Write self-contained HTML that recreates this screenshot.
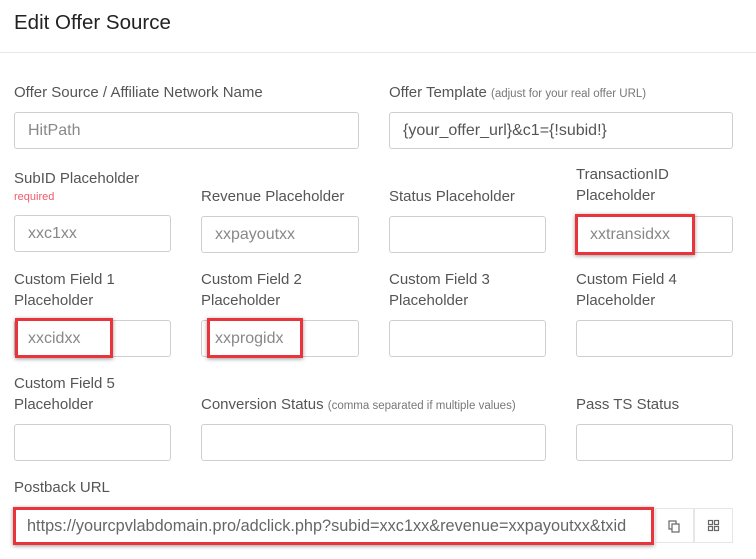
<!DOCTYPE html>
<html><head><style>
body{margin:0;width:756px;height:559px;background:#fff;font-family:"Liberation Sans",sans-serif;position:relative;overflow:hidden}
.a{position:absolute;white-space:nowrap}
.t{left:14px;top:11px;font-size:20.5px;color:#222}
.hr{left:0;top:52px;width:756px;height:1px;background:#e6e8ea}
.l{font-size:15px;color:#555;line-height:21px}
.l small{font-size:11.5px;color:#777}
.i{border:1px solid #cfcfcf;border-radius:3px;box-sizing:border-box;height:37px;font-size:16px;color:#888;line-height:35px;padding-left:13px}
.r{border:3px solid #e8343a;box-shadow:0 1px 4px rgba(0,0,0,.4);box-sizing:border-box}
</style></head><body>
<div class="a t">Edit Offer Source</div>
<div class="a hr"></div>

<div class="a l" style="left:14px;top:82px">Offer Source / Affiliate Network Name</div>
<div class="a l" style="left:389px;top:82px">Offer Template <small>(adjust for your real offer URL)</small></div>
<div class="a i" style="left:14px;top:112px;width:345px">HitPath</div>
<div class="a i" style="left:389px;top:112px;width:344px;color:#555">{your_offer_url}&amp;c1={!subid!}</div>

<div class="a l" style="left:14px;top:168px">SubID Placeholder</div>
<div class="a" style="left:14px;top:191px;font-size:11px;color:#f05a6a">required</div>
<div class="a l" style="left:201px;top:186px">Revenue Placeholder</div>
<div class="a l" style="left:389px;top:186px">Status Placeholder</div>
<div class="a l" style="left:576px;top:164px">TransactionID<br>Placeholder</div>
<div class="a i" style="left:14px;top:215px;width:157px">xxc1xx</div>
<div class="a i" style="left:201px;top:216px;width:158px">xxpayoutxx</div>
<div class="a i" style="left:389px;top:216px;width:157px"></div>
<div class="a i" style="left:576px;top:216px;width:157px">xxtransidxx</div>
<div class="a r" style="left:575px;top:214px;width:120px;height:41px"></div>

<div class="a l" style="left:14px;top:269px">Custom Field 1<br>Placeholder</div>
<div class="a l" style="left:201px;top:269px">Custom Field 2<br>Placeholder</div>
<div class="a l" style="left:389px;top:269px">Custom Field 3<br>Placeholder</div>
<div class="a l" style="left:576px;top:269px">Custom Field 4<br>Placeholder</div>
<div class="a i" style="left:14px;top:320px;width:157px">xxcidxx</div>
<div class="a i" style="left:201px;top:320px;width:158px">xxprogidx</div>
<div class="a i" style="left:389px;top:320px;width:157px"></div>
<div class="a i" style="left:576px;top:320px;width:157px"></div>
<div class="a r" style="left:15px;top:318px;width:98px;height:40px"></div>
<div class="a r" style="left:207px;top:318px;width:96px;height:40px"></div>

<div class="a l" style="left:14px;top:373px">Custom Field 5<br>Placeholder</div>
<div class="a l" style="left:201px;top:394px">Conversion Status <small>(comma separated if multiple values)</small></div>
<div class="a l" style="left:576px;top:394px">Pass TS Status</div>
<div class="a i" style="left:14px;top:424px;width:157px"></div>
<div class="a i" style="left:201px;top:424px;width:345px"></div>
<div class="a i" style="left:576px;top:424px;width:157px"></div>

<div class="a l" style="left:14px;top:477px">Postback URL</div>
<div class="a i" style="left:14px;top:508px;width:640px;height:36px;font-size:16.3px;padding-left:12px;overflow:hidden;color:#666">https://yourcpvlabdomain.pro/adclick.php?subid=xxc1xx&amp;revenue=xxpayoutxx&amp;txid</div>
<div class="a r" style="left:13px;top:507px;width:641px;height:38px"></div>
<div class="a" style="left:654px;top:508px;width:40px;height:35px;border:1px solid #e6e6e6;box-sizing:border-box"><svg width="38" height="33"><g fill="none" stroke="#666" stroke-width="1.2"><rect x="14" y="12" width="7" height="8"/><rect x="17" y="15" width="7" height="8" fill="#fff"/></g></svg></div>
<div class="a" style="left:694px;top:508px;width:39px;height:35px;border:1px solid #e6e6e6;box-sizing:border-box"><svg width="37" height="33"><g fill="none" stroke="#666" stroke-width="1.2"><rect x="13.5" y="11.5" width="4" height="4"/><rect x="19.5" y="11.5" width="4" height="4"/><rect x="13.5" y="17.5" width="4" height="4"/><rect x="19.5" y="17.5" width="4" height="4"/></g></svg></div>
</body></html>
